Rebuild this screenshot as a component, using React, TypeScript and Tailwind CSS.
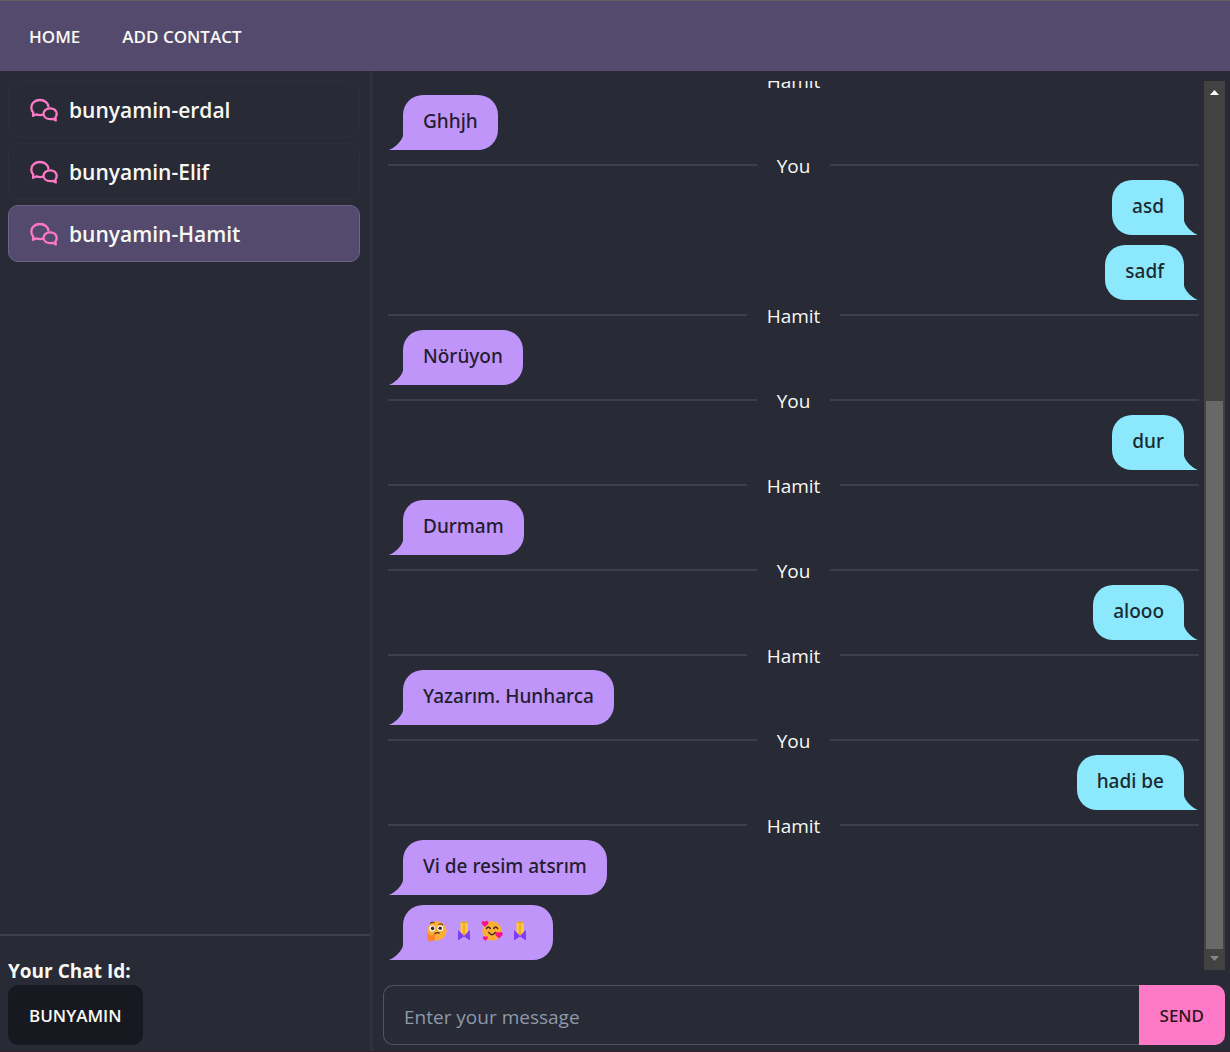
import React from "react";

type Entry =
  | { kind: "divider"; who: string }
  | { kind: "in" | "out"; body: React.ReactNode };

function ChatIcon() {
  return (
    <svg
      viewBox="0 0 30 30"
      aria-hidden="true"
      className="size-[30px] shrink-0 text-[#ff7ac6]"
      fill="none"
      stroke="currentColor"
      strokeWidth="2.3"
      strokeLinejoin="round"
    >
      <path d="M19.6 12.6 C19.6 8.2 15.8 5 10.9 5 C6 5 2.3 8.2 2.3 12.4 C2.3 14.6 3 16.2 4.3 17.5 L4 20.8 L7.6 19.4 C9.6 20.2 12 20.2 14.4 19.6" />
      <path d="M26.4 22.6 C27.3 21.5 27.7 20.3 27.7 18.8 C27.7 15.7 25 13.3 21.3 13.3 C17.5 13.3 14.5 15.7 14.5 18.8 C14.5 22 17.5 24.2 21.3 24.2 C22.2 24.2 23 24.1 23.8 23.8 L26.8 25.4 Z" />
    </svg>
  );
}

function Thinking() {
  return (
    <svg viewBox="0 0 22 22" className="size-[22px]" role="img" aria-label="thinking face">
      <circle cx="12" cy="10.8" r="9.6" fill="#fbb034" />
      <circle cx="7.3" cy="8.5" r="2.9" fill="#fff" />
      <circle cx="15.3" cy="8.2" r="2.9" fill="#fff" />
      <circle cx="7.6" cy="8.4" r="1.8" fill="#43262b" />
      <circle cx="15.2" cy="8.2" r="1.8" fill="#43262b" />
      <path d="M5 3.6 Q7 1.6 9.5 2.8 M13.5 4.4 Q16 3 18 5" stroke="#6b3f1d" strokeWidth="1.1" fill="none" />
      <path d="M9.5 14 Q12 11.6 14.5 13.4" stroke="#43262b" strokeWidth="1.4" fill="none" />
      <path d="M3 13.5 Q4.5 12.5 4.6 15.5 L10 14.6 Q11.6 15.2 9.6 16.4 Q11 20.8 6.5 21.3 Q2.2 21.4 2.2 17.5 Z" fill="#ff822d" />
    </svg>
  );
}

function Hands() {
  return (
    <svg viewBox="0 0 14 22" className="h-[22px] w-[14px]" role="img" aria-label="folded hands">
      <path d="M3.5 2.5 L5 1.2 L6.5 2 H8 L9.5 1.2 L10.8 2.5 V12 L7 16.5 L3.5 12 Z" fill="#ffc83d" />
      <path d="M7 2 V15" stroke="#d68a12" strokeWidth="0.9" />
      <path d="M3.5 2.5 H10.8" stroke="#e19a1c" strokeWidth="1" />
      <path d="M1 10 L7 15.8 L13 10 V20.6 L7 16.4 L1 20.6 Z" fill="#7f3df5" />
    </svg>
  );
}

function Hearts() {
  return (
    <svg viewBox="0 0 22 22" className="size-[22px]" role="img" aria-label="smiling face with hearts">
      <circle cx="11" cy="11" r="9.7" fill="#fbb034" />
      <path d="M5.5 8.5 Q7.3 5.5 9.2 8.5 M12.8 8.5 Q14.8 5.5 16.6 8.5 M7.8 12.4 Q11 17 14.3 12.4" stroke="#43262b" strokeWidth="1.5" fill="none" strokeLinecap="round" />
      <path d="M4 7 L0.9 3.9 C-0.4 1.5 2.6 -0.2 4 1.7 C5.6 -0.4 8.4 1.7 7.1 4 Z" fill="#ff0f8b" />
      <path d="M18 18.6 L14.6 15.2 C13.2 12.6 16.5 10.8 18 12.9 C19.6 10.7 22.8 12.6 21.4 15.2 Z" fill="#ff0f8b" />
      <path d="M4.3 21 L2 18.6 C1 16.7 3.2 15.4 4.3 16.9 C5.4 15.4 7.6 16.7 6.6 18.6 Z" fill="#ff0f8b" />
    </svg>
  );
}

const contacts = ["bunyamin-erdal", "bunyamin-Elif", "bunyamin-Hamit"];

const them = (body: string): Entry => ({ kind: "in", body });
const me = (body: string): Entry => ({ kind: "out", body });
const sep = (who: string): Entry => ({ kind: "divider", who });

const entries: Entry[] = [
  sep("Hamit"), them("Ghhjh"),
  sep("You"), me("asd"), me("sadf"),
  sep("Hamit"), them("Nörüyon"),
  sep("You"), me("dur"),
  sep("Hamit"), them("Durmam"),
  sep("You"), me("alooo"),
  sep("Hamit"), them("Yazarım. Hunharca"),
  sep("You"), me("hadi be"),
  sep("Hamit"), them("Vi de resim atsrım"),
  {
    kind: "in",
    body: (
      <span className="flex h-6 items-center gap-2.5 pr-1.5 pl-0.5">
        <Thinking /><Hands /><Hearts /><Hands />
      </span>
    ),
  },
];

function Divider({ who }: { who: string }) {
  return (
    <div className="flex h-5 shrink-0 items-center gap-5 text-[19px] before:h-0.5 before:flex-1 before:bg-[#3d3f4a] after:h-0.5 after:flex-1 after:bg-[#3d3f4a]">
      <span className="pt-0.5 leading-5">{who}</span>
    </div>
  );
}

function Bubble({ out, children }: { out: boolean; children: React.ReactNode }) {
  return (
    <div className={out ? "flex shrink-0 justify-end py-[5px] pr-[15px]" : "flex shrink-0 py-[5px] pl-[15px]"}>
      <div
        className={
          out
            ? "relative h-[55px] rounded-[20px] rounded-br-none bg-[#8be8fd] px-5 py-3.5 font-['Noto_Sans','Open_Sans',sans-serif] text-[19px] leading-6 font-medium text-[#1b2a2f]"
            : "relative h-[55px] rounded-[20px] rounded-bl-none bg-[#bf95f9] px-5 py-3.5 font-['Noto_Sans','Open_Sans',sans-serif] text-[19px] leading-6 font-medium text-[#241c2f]"
        }
      >
        {children}
        <svg
          viewBox="0 0 3 3"
          aria-hidden="true"
          className={out ? "absolute bottom-0 left-full size-[15px] fill-[#8be8fd]" : "absolute right-full bottom-0 size-[15px] fill-[#bf95f9]"}
        >
          <path d={out ? "M0 3 H3 C2 3 0 1 0 0 Z" : "M0 3 H3 V0 C3 1 1 3 0 3 Z"} />
        </svg>
      </div>
    </div>
  );
}

export default function App() {
  return (
    <div className="flex h-screen flex-col border-b border-[#34202f] bg-[#282a36] font-['Open_Sans','Noto_Sans',sans-serif] text-[#f8f8f2]">
      <nav className="flex h-[71px] shrink-0 items-center border-t border-[#5f5f5f] bg-[#544a6e] px-2 pt-0.5 text-[17px] font-semibold">
        <a href="#home" className="px-[21px] py-3">HOME</a>
        <a href="#add" className="px-[21px] py-3">ADD CONTACT</a>
      </nav>
      <div className="flex min-h-0 flex-1">
        <aside className="flex w-[373px] shrink-0 flex-col border-r-[3px] border-[#2f313d]">
          <div className="flex flex-1 flex-col gap-[5px] py-2.5 pr-2.5 pl-2">
            {contacts.map((name, i) => (
              <button
                key={name}
                className={
                  i === 2
                    ? "flex h-[57px] items-center gap-2.5 rounded-[10px] border border-[#6c6389] bg-[#544a6e] px-5 text-[21px] font-semibold"
                    : "flex h-[57px] items-center gap-2.5 rounded-[10px] border border-[#2c2e3b] px-5 text-[21px] font-semibold"
                }
              >
                <ChatIcon />
                <span className="pt-0.5">{name}</span>
              </button>
            ))}
          </div>
          <div className="border-t-2 border-[#3d3f4a] px-2 pt-[21px] pb-1.5">
            <p className="text-[19px] leading-7 font-bold">Your Chat Id:</p>
            <button className="h-[60px] rounded-[10px] bg-[#181920] px-[21px] pt-0.5 text-[17px] font-semibold">BUNYAMIN</button>
          </div>
        </aside>
        <main className="flex min-w-0 flex-1 flex-col pt-2.5 pr-[5px] pb-1.5 pl-2.5">
          <div className="flex min-h-0 flex-1">
            <div className="flex min-w-0 flex-1 flex-col justify-end overflow-hidden px-[5px] pb-[5px]">
              {entries.map((e, i) =>
                e.kind === "divider" ? (
                  <Divider key={i} who={e.who} />
                ) : (
                  <Bubble key={i} out={e.kind === "out"}>{e.body}</Bubble>
                ),
              )}
            </div>
            <div aria-hidden="true" className="flex w-[21px] shrink-0 flex-col items-center bg-[#424242]">
              <svg viewBox="0 0 9 5" className="mt-[9px] h-[5px] w-[9px] fill-white"><path d="M0 5 L4.5 0 L9 5 Z" /></svg>
              <div className="flex-[306]" />
              <div className="w-[17px] flex-[548] bg-[#686868]" />
              <svg viewBox="0 0 9 5" className="mt-[7px] mb-[9px] h-[5px] w-[9px] fill-[#868686]"><path d="M0 0 H9 L4.5 5 Z" /></svg>
            </div>
          </div>
          <form className="mt-[15px] flex h-[60px] shrink-0" onSubmit={(e) => e.preventDefault()}>
            <input
              aria-label="Message"
              placeholder="Enter your message"
              className="min-w-0 flex-1 rounded-l-[10px] border border-r-0 border-[#515360] bg-transparent px-5 pt-1 text-[19px] outline-none placeholder:text-[#8d99a8]"
            />
            <button className="rounded-r-[10px] bg-[#ff7ac6] px-[21px] pt-0.5 font-['Noto_Sans','Open_Sans',sans-serif] text-[17px] font-medium text-[#2a1420]">SEND</button>
          </form>
        </main>
      </div>
    </div>
  );
}
